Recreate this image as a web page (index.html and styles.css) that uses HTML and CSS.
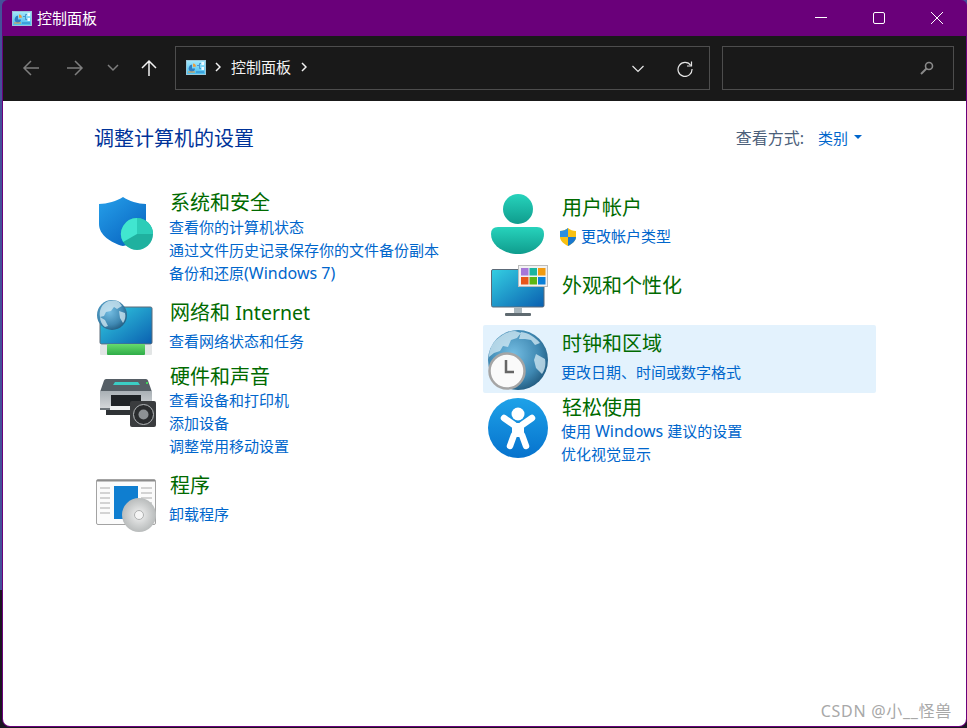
FILE: index.html
```html
<!DOCTYPE html>
<html lang="zh-CN">
<head>
<meta charset="utf-8">
<title>控制面板</title>
<link rel="stylesheet" href="styles.css">
</head>
<body>
<svg class="defs" width="0" height="0" aria-hidden="true">
  <defs>
    <linearGradient id="cpSky" x1="0" y1="0" x2="0" y2="1"><stop offset="0" stop-color="#a5e8fb"/><stop offset="1" stop-color="#45bdef"/></linearGradient>
    <symbol id="cp" viewBox="0 0 20 15">
      <rect x=".5" y=".5" width="19" height="14" fill="url(#cpSky)" stroke="#9cc6d8"/>
      <path d="M3 7a3.200 3.200 0 1 0 6 1.500H6V4.500A3.200 3.200 0 0 0 3 7Z" fill="#2f7fc4"/>
      <path d="M7 3.500a3 3 0 0 1 2.800 3.300H7Z" fill="#ee9a3c"/>
      <path d="M11 5.500h2.500v-2H15M13.500 5.500v3H15" fill="none" stroke="#3a86c6" stroke-width=".8"/>
      <rect x="15.500" y="2" width="2.500" height="3" fill="#eef9ff"/>
      <rect x="15.500" y="7" width="2.500" height="3" fill="#eef9ff"/>
      <rect x="2" y="11.500" width="7" height="1" fill="#ee9a3c"/>
      <rect x="10" y="11.500" width="8" height="1" fill="#2a7fc4"/>
    </symbol>
    <linearGradient id="shieldG" x1="0" y1="0" x2=".8" y2="1"><stop offset="0" stop-color="#26a0ea"/><stop offset="1" stop-color="#0864c0"/></linearGradient>
    <linearGradient id="tealG" x1="0" y1="0" x2="0" y2="1"><stop offset="0" stop-color="#27d3bc"/><stop offset="1" stop-color="#0f9c8d"/></linearGradient>
    <linearGradient id="screenG" x1="0" y1="0" x2="1" y2="1"><stop offset="0" stop-color="#34cfe2"/><stop offset="1" stop-color="#0a5fb0"/></linearGradient>
    <radialGradient id="globeG" cx=".42" cy=".4" r=".72"><stop offset="0" stop-color="#74bde2"/><stop offset=".6" stop-color="#3f88b2"/><stop offset="1" stop-color="#174a6c"/></radialGradient>
    <linearGradient id="easeG" x1="0" y1="0" x2="0" y2="1"><stop offset="0" stop-color="#1ea2e8"/><stop offset="1" stop-color="#0672cd"/></linearGradient>
    <linearGradient id="greenG" x1="0" y1="0" x2="0" y2="1"><stop offset="0" stop-color="#66da6c"/><stop offset="1" stop-color="#2fac48"/></linearGradient>
    <linearGradient id="prnG" x1="0" y1="0" x2="0" y2="1"><stop offset="0" stop-color="#a9b0b5"/><stop offset="1" stop-color="#d8dbdd"/></linearGradient>
    <radialGradient id="discG" cx=".5" cy=".5" r=".5"><stop offset="0" stop-color="#f3f3f3"/><stop offset=".6" stop-color="#cfd1d1"/><stop offset="1" stop-color="#b9bcbc"/></radialGradient>
  </defs>
</svg>

<div class="window">
  <header class="titlebar">
    <svg class="cp-icon"><use href="#cp"/></svg>
    <span class="title-text">控制面板</span>
    <div class="caption">
      <svg class="cap-btn" viewBox="0 0 12 12"><path d="M0 5.500h12" stroke="#fff" stroke-width="1"/></svg>
      <svg class="cap-btn" viewBox="0 0 12 12"><rect x=".5" y=".5" width="11" height="11" rx="1.500" fill="none" stroke="#fff"/></svg>
      <svg class="cap-btn" viewBox="0 0 12 12"><path d="M0 0l12 12M12 0L0 12" stroke="#fff" stroke-width="1"/></svg>
    </div>
  </header>

  <nav class="toolbar">
    <svg class="nav-icon" viewBox="0 0 18 18"><path d="M17 9H2M9 2L2 9l7 7" fill="none" stroke="#7e7e7e" stroke-width="1.500"/></svg>
    <svg class="nav-icon" viewBox="0 0 18 18"><path d="M1 9h15M9 2l7 7-7 7" fill="none" stroke="#7e7e7e" stroke-width="1.500"/></svg>
    <svg class="nav-small" viewBox="0 0 12 8"><path d="M1 1l5 5 5-5" fill="none" stroke="#7e7e7e" stroke-width="1.500"/></svg>
    <svg class="nav-icon up" viewBox="0 0 18 18"><path d="M9 17V2M2 9l7-7 7 7" fill="none" stroke="#f2f2f2" stroke-width="1.500"/></svg>
    <div class="address">
      <svg class="cp-icon"><use href="#cp"/></svg>
      <svg class="crumb" viewBox="0 0 6 10"><path d="M1 1l4 4-4 4" fill="none" stroke="#f2f2f2" stroke-width="1.500"/></svg>
      <span class="addr-text">控制面板</span>
      <svg class="crumb" viewBox="0 0 6 10"><path d="M1 1l4 4-4 4" fill="none" stroke="#f2f2f2" stroke-width="1.500"/></svg>
      <span class="spacer"></span>
      <svg class="addr-chev" viewBox="0 0 12 8"><path d="M.5 1l5.500 5.500L11.500 1" fill="none" stroke="#e6e6e6" stroke-width="1.200"/></svg>
      <svg class="refresh" viewBox="0 0 16 16"><path d="M13.800 4.500A7 7 0 1 0 15 8" fill="none" stroke="#e6e6e6" stroke-width="1.200"/><path d="M14.500 .5v4.500H10" fill="none" stroke="#e6e6e6" stroke-width="1.200"/></svg>
    </div>
    <div class="search">
      <svg class="search-icon" viewBox="0 0 14 14"><circle cx="9" cy="5" r="3.500" fill="none" stroke="#8a8a8a" stroke-width="1.600"/><path d="M6.500 7.500L1 13" stroke="#8a8a8a" stroke-width="2"/></svg>
    </div>
  </nav>

  <main class="content">
    <div class="page-head">
      <h1 class="page-title">调整计算机的设置</h1>
      <div class="view-by">
        <span class="view-label">查看方式:</span>
        <a class="view-value">类别</a>
        <span class="view-caret"></span>
      </div>
    </div>

    <div class="columns">
      <div class="col col-left">
        <section class="cat cat-security">
          <svg class="cat-icon" viewBox="0 0 54 54">
            <path d="M24 0C18 4 8 7 0 7V27C0 38 12 46 24 49C36 46 47 38 47 27V7C39 7 30 4 24 0Z" fill="url(#shieldG)"/>
            <circle cx="38" cy="37" r="16" fill="#1fb19f"/>
            <path d="M38 37V21A16 16 0 0 0 24.100 45Z" fill="#41e6d0"/>
            <path d="M38 37V21A16 16 0 0 1 54 37Z" fill="#2ccdb8"/>
          </svg>
          <div class="cat-body">
            <h2 class="cat-title">系统和安全</h2>
            <a class="cat-link">查看你的计算机状态</a>
            <a class="cat-link">通过文件历史记录保存你的文件备份副本</a>
            <a class="cat-link">备份和还原<span class="latin">(Windows 7)</span></a>
          </div>
        </section>
        <section class="cat cat-network">
          <svg class="cat-icon" viewBox="0 0 56 56">
            <rect x="3" y="7" width="52" height="37" rx="1.500" fill="url(#screenG)" stroke="#5c6a78"/>
            <rect x="3" y="45" width="52" height="10" rx="1" fill="#e2e5e5"/>
            <rect x="10" y="44" width="38" height="11" rx="1" fill="url(#greenG)"/>
            <circle cx="15" cy="15" r="15" fill="url(#globeG)"/>
            <path d="M8 3c4-3 10-3 14-1l3 4-5 3-3-2-3 4-5 1-2 4-4 1C2 11 4 6 8 3ZM3 17l5 3 3 6-3 1C5 25 3 21 3 17ZM22 11l6 2c1 4 0 7-2 10l-3-5Z" fill="#d5ebf4" opacity=".75"/>
          </svg>
          <div class="cat-body">
            <h2 class="cat-title">网络和 <span class="latin-title">Internet</span></h2>
            <a class="cat-link">查看网络状态和任务</a>
          </div>
        </section>
        <section class="cat cat-hardware">
          <svg class="cat-icon" viewBox="0 0 56 48">
            <path d="M0 13L4 1.500Q4.500 0 6 0H46Q47.500 0 48 1.500L52 13Z" fill="#565f66"/>
            <path d="M13 6l2-3h23l2 3Z" fill="#3bcdc4"/>
            <rect x="46" y="3" width="2" height="2" fill="#3fd15a"/>
            <rect x="0" y="12" width="52" height="19" fill="url(#prnG)"/>
            <rect x="0" y="29" width="52" height="2" fill="#6d7479"/>
            <rect x="11" y="16" width="30" height="15" fill="#1f2326"/>
            <rect x="6" y="31" width="34" height="5" fill="#2f3336"/>
            <rect x="10" y="27" width="24" height="4" fill="#eef0f0"/>
            <rect x="30" y="22" width="26" height="26" rx="2" fill="#3a3c3e"/>
            <circle cx="43.500" cy="35.500" r="10" fill="#2a2c2e" stroke="#b4b7b9"/>
            <circle cx="43.500" cy="35.500" r="5" fill="#8d9194"/>
          </svg>
          <div class="cat-body">
            <h2 class="cat-title">硬件和声音</h2>
            <a class="cat-link">查看设备和打印机</a>
            <a class="cat-link">添加设备</a>
            <a class="cat-link">调整常用移动设置</a>
          </div>
        </section>
        <section class="cat cat-programs">
          <svg class="cat-icon" viewBox="0 0 60 53">
            <rect x=".5" y=".5" width="59" height="45" rx="1.500" fill="#fbfbfb" stroke="#a3a3a3"/>
            <rect x="1" y="1" width="58" height="1.500" fill="#8c8c8c"/>
            <rect x="18" y="7" width="24" height="33" fill="#0f7ed0"/>
            <path d="M4 9h10M4 14h10M4 19h10M4 24h10M4 29h10M4 34h10M45 9h11M45 14h11M45 19h11M45 24h11" stroke="#c6c6c6" stroke-width="1.300"/>
            <circle cx="43" cy="36" r="17" fill="url(#discG)"/>
            <circle cx="43" cy="36" r="4.500" fill="#f5f5f5" stroke="#aeb0b0"/>
          </svg>
          <div class="cat-body">
            <h2 class="cat-title">程序</h2>
            <a class="cat-link">卸载程序</a>
          </div>
        </section>
      </div>

      <div class="col col-right">
        <section class="cat cat-user">
          <svg class="cat-icon" viewBox="0 0 53 60">
            <circle cx="27" cy="15" r="15" fill="url(#tealG)"/>
            <path d="M7 33H46Q53 33 53 40C53 52 40 60 27 60S0 52 0 40Q0 33 7 33Z" fill="url(#tealG)"/>
          </svg>
          <div class="cat-body">
            <h2 class="cat-title">用户帐户</h2>
            <a class="cat-link shield-link"><svg class="uac" viewBox="0 0 18 18"><path d="M9 0c2 2 5 3 8 3v6c0 4-4 7-8 9-4-2-8-5-8-9V3c3 0 6-1 8-3Z" fill="#f8c012"/><path d="M9 0v9H1V3c3 0 6-1 8-3Z" fill="#2a8fe0"/><path d="M9 9h8c0 4-4 7-8 9Z" fill="#1878cf"/></svg>更改帐户类型</a>
          </div>
        </section>
        <section class="cat cat-appearance">
          <svg class="cat-icon" viewBox="0 0 57 51">
            <rect x=".5" y="4.500" width="52.500" height="37.500" rx="1.500" fill="url(#screenG)" stroke="#5c6a78"/>
            <rect x="23" y="42" width="8" height="6" fill="#a9b5bb"/>
            <rect x="14" y="48" width="26" height="3" rx="1" fill="#5f6a70"/>
            <rect x="27.500" y=".5" width="29" height="21" fill="#f2f2f2" stroke="#bdbdbd"/>
            <rect x="30" y="3" width="7.500" height="7.500" fill="#a678d8"/><rect x="38.500" y="3" width="7.500" height="7.500" fill="#1cb5a0"/><rect x="47" y="3" width="7.500" height="7.500" fill="#f09a10"/>
            <rect x="30" y="12" width="7.500" height="7.500" fill="#e8561a"/><rect x="38.500" y="12" width="7.500" height="7.500" fill="#5cb614"/><rect x="47" y="12" width="7.500" height="7.500" fill="#0a7fd8"/>
          </svg>
          <div class="cat-body">
            <h2 class="cat-title">外观和个性化</h2>
          </div>
        </section>
        <section class="cat cat-clock">
          <svg class="cat-icon" viewBox="0 0 60 60">
            <circle cx="30" cy="30" r="30" fill="url(#globeG)"/>
            <path d="M8 10c5-5 12-9 19-9l6 2-4 5-6 2-3 7-5-1-3 5-6 2-5 4C1 21 3 15 8 10ZM33 2c8 1 14 5 19 11l-5 2-4-5-6-1-6 0ZM48 24l9 5c1 6 0 11-3 15l-6-6-2-8Z" fill="#d5ebf4" opacity=".75"/>
            <circle cx="19" cy="41" r="17.500" fill="#fafafa" stroke="#a5a5a5" stroke-width="2.500"/>
            <path d="M18 30v12h8" fill="none" stroke="#666" stroke-width="2.500"/>
          </svg>
          <div class="cat-body">
            <h2 class="cat-title">时钟和区域</h2>
            <a class="cat-link">更改日期、时间或数字格式</a>
          </div>
        </section>
        <section class="cat cat-ease">
          <svg class="cat-icon" viewBox="0 0 60 60">
            <circle cx="30" cy="30" r="30" fill="url(#easeG)"/>
            <circle cx="30" cy="16" r="6.500" fill="#fff"/>
            <path d="M16 20l10 7M44 20l-10 7M26 37l-4 11M34 37l4 11" fill="none" stroke="#fff" stroke-width="6.500" stroke-linecap="round"/>
            <rect x="24" y="25" width="12" height="14" rx="2" fill="#fff"/>
          </svg>
          <div class="cat-body">
            <h2 class="cat-title">轻松使用</h2>
            <a class="cat-link">使用 <span class="latin">Windows</span> 建议的设置</a>
            <a class="cat-link">优化视觉显示</a>
          </div>
        </section>
      </div>
    </div>
    <div class="watermark">CSDN @小__怪兽</div>
  </main>
</div>
</body>
</html>
```

FILE: styles.css
```css
* { box-sizing: border-box; }
html, body { margin: 0; padding: 0; height: 100%; overflow: hidden; }
body {
  font-family: "Noto Sans", "Noto Sans CJK SC", sans-serif;
  background: linear-gradient(#45509a 0, #45509a 590px, #1a1420 590px);
}
.defs { position: absolute; }
.window {
  height: 727px;
  margin-left: 2px;
  display: flex;
  flex-direction: column;
  background: #6a007a;
  border-left: 1px solid #6a007a;
  border-right: 1px solid #6a007a;
  border-bottom: 1px solid #6a007a;
  border-radius: 6px 6px 8px 8px;
}

.titlebar { height: 36px; flex: none; display: flex; align-items: center; padding-left: 9px; color: #fff; font-size: 15px; }
.cp-icon { width: 20px; height: 15px; flex: none; }
.title-text { margin: 0 0 2px 5px; }
.caption { margin-left: auto; display: flex; gap: 46px; padding-right: 23px; }
.cap-btn { width: 12px; height: 12px; display: block; }

.toolbar { height: 65px; flex: none; background: #191919; display: flex; align-items: center; padding: 0 12px 1px 19px; }
.nav-icon { width: 18px; height: 18px; flex: none; }
.nav-icon + .nav-icon { margin-left: 26px; }
.nav-small { width: 12px; height: 8px; flex: none; margin-left: 23px; }
.up { margin-left: 21px; }
.address { width: 536px; height: 44px; margin-left: 17px; border: 1px solid #4d4d4d; display: flex; align-items: center; padding: 0 16px 0 10px; color: #f2f2f2; font-size: 15px; }
.address .cp-icon { margin-bottom: 2px; }
.crumb { width: 6px; height: 10px; flex: none; margin: 0 0 2px 9px; }
.addr-text { margin: 0 0 4px 10px; }
.addr-text + .crumb { margin-left: 10px; }
.spacer { flex: 1; }
.addr-chev { width: 12px; height: 8px; margin-top: 2px; }
.refresh { width: 16px; height: 16px; margin: 1px 0 0 33px; }
.search { width: 233px; height: 44px; margin-left: 12px; border: 1px solid #4d4d4d; display: flex; align-items: center; justify-content: flex-end; padding-right: 19px; }
.search-icon { width: 14px; height: 14px; }

.content { flex: 1; background: #fff; position: relative; padding: 23px 0 0 91px; border-radius: 0 0 7px 7px; }
.page-head { display: flex; align-items: center; height: 28px; padding-right: 104px; }
.page-title { margin: 2px 0 0; font-size: 20px; line-height: 28px; font-weight: 400; color: #003399; }
.view-by { margin: 0 0 2px auto; display: flex; align-items: center; }
.view-label { color: #4c607a; font-size: 16px; }
.view-value { color: #0066cc; margin-left: 14px; font-size: 15px; }
.view-caret { width: 0; height: 0; margin-left: 6px; border: 4px solid transparent; border-top: 4px solid #0066cc; border-bottom: 0; }

.columns { display: flex; margin-top: 37px; }
.col { display: flex; flex-direction: column; }
.col-left { width: 389px; }
.col-right { width: 393px; padding-top: 4px; }
.cat { display: grid; align-items: start; }
.col-left .cat { grid-template-columns: 76px 1fr; }
.col-right .cat { grid-template-columns: 79px 1fr; }
.cat-body { display: flex; flex-direction: column; }
.col-right .cat-body { padding-top: 1px; }
.cat-title { margin: 0; font-size: 20px; line-height: 28px; font-weight: 400; color: #006a00; }
.cat-link { font-size: 15px; line-height: 23px; color: #0066cc; white-space: nowrap; margin-left: -1px; }
.latin { font-size: 16px; }
.latin-title { font-size: 19.500px; }

.cat-security { height: 110px; }
.cat-security .cat-icon { width: 54px; height: 54px; margin: 8px 0 0 5px; }
.cat-security .cat-link:first-of-type { margin-top: -1px; }

.cat-network { height: 64px; }
.cat-network .cat-icon { width: 56px; height: 56px; margin: 1px 0 0 3px; }
.cat-network .cat-link { margin-top: 3px; }

.cat-hardware { height: 109px; }
.cat-hardware .cat-icon { width: 56px; height: 48px; margin: 16px 0 0 6px; }
.cat-hardware .cat-link:first-of-type { margin-top: -2px; }

.cat-programs .cat-icon { width: 60px; height: 53px; margin: 7px 0 0 2px; }
.cat-programs .cat-link { margin-top: 3px; }

.cat-user { height: 78px; }
.cat-user .cat-icon { width: 53px; height: 60px; margin: 1px 0 0 8px; }
.cat-user .cat-link { margin-top: 3px; }

.cat-appearance { height: 54px; }
.cat-appearance .cat-icon { width: 57px; height: 51px; margin: -6px 0 0 8px; }

.cat-clock { height: 68px; padding-top: 4px; background: #e3f2fd; border-radius: 2px; }
.cat-clock .cat-icon { width: 60px; height: 60px; margin: 1px 0 0 5px; }
.cat-clock .cat-link { margin-top: 3px; }

.cat-ease .cat-icon { width: 60px; height: 60px; margin: 5px 0 0 5px; }
.cat-ease .cat-link:first-of-type { margin-top: -2px; }

.shield-link { display: flex; align-items: center; margin-left: -3px; }
.uac { width: 18px; height: 18px; margin-right: 4px; flex: none; }

.watermark { position: absolute; right: 14px; bottom: 4px; font-size: 16px; letter-spacing: .7px; color: #a8a8a8; }
```
